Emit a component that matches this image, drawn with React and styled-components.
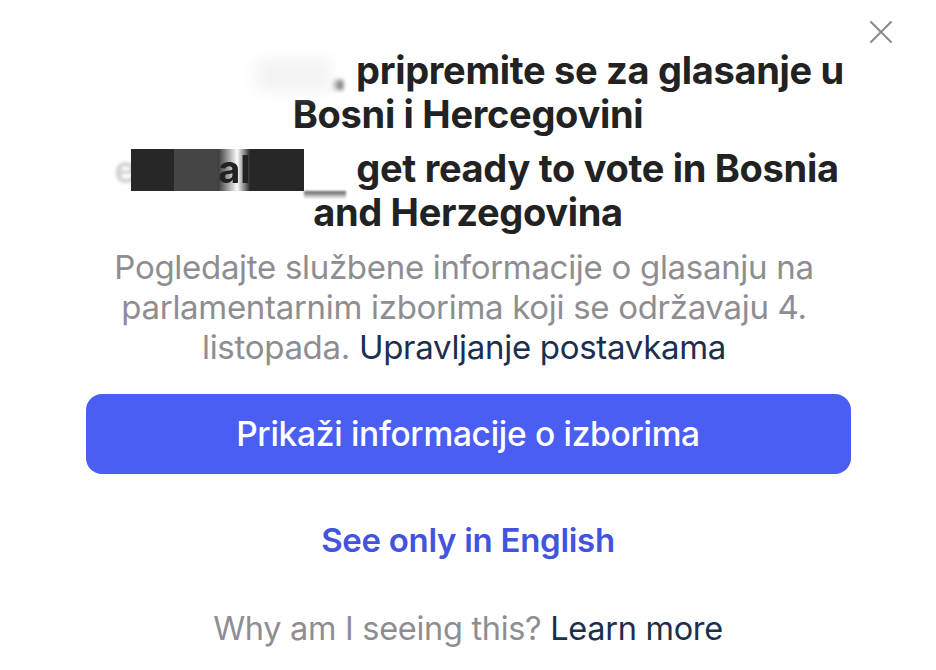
import styled, { createGlobalStyle } from "styled-components";

const GlobalStyle = createGlobalStyle`
  html, body {
    margin: 0;
    padding: 0;
    background: #ffffff;
  }
  body {
    font-family: Inter, "Noto Sans", "Liberation Sans", sans-serif;
    -webkit-font-smoothing: antialiased;
  }
`

const Sheet = styled.div`
  position: relative;
  width: 936px;
  height: 670px;
  overflow: hidden;
  background: #fff;
  display: flex;
  flex-direction: column;
  align-items: center;
  padding: 48px 86px 0 86px;
  box-sizing: border-box;
`

const CloseButton = styled.button`
  position: absolute;
  top: 18px;
  right: 41px;
  width: 28px;
  height: 28px;
  padding: 0;
  border: none;
  background: transparent;
  display: flex;
  align-items: center;
  justify-content: center;
  cursor: pointer;
`

const Title = styled.h2`
  margin: 0;
  width: 100%;
  text-align: center;
  font-size: 38px;
  line-height: 44px;
  font-weight: 700;
  color: #222222;
  letter-spacing: -0.3px;
  white-space: nowrap;
  & + & {
    margin-top: 10px;
  }
`

/* the blurred-out name at the start of each title */
const Redacted = styled.span`
  display: inline-flex;
  align-items: flex-start;
  vertical-align: top;
  width: ${props => props.$w}px;
  height: 44px;
  margin-right: 10px;
  letter-spacing: 0;
`

const Smudge = styled.span`
  position: relative;
  flex: none;
  width: ${props => props.$w}px;
  height: ${props => props.$h || 42}px;
  margin-top: ${props => props.$top || 0}px;
  background: ${props => props.$bg || "transparent"};
  filter: blur(${props => props.$blur || 0}px);
  color: ${props => props.$color || "transparent"};
  font-size: 38px;
  line-height: 40px;
`

const Description = styled.p`
  margin: 13px 0 0;
  width: 100%;
  padding-right: 8px;
  box-sizing: border-box;
  text-align: center;
  font-size: 33px;
  line-height: 40px;
  font-weight: 400;
  color: #8e8e92;
  letter-spacing: -0.3px;
  white-space: nowrap;
`

const InlineLink = styled.a`
  color: #1b2f4e;
  text-decoration: none;
`

const PrimaryButton = styled.button`
  margin-top: 27px;
  width: 765px;
  height: 80px;
  flex: none;
  border: none;
  border-radius: 16px;
  background: #4b5ef4;
  color: #ffffff;
  font-family: inherit;
  font-size: 33.5px;
  font-weight: 500;
  letter-spacing: -0.3px;
  cursor: pointer;
`

const TextButton = styled.button`
  margin-top: 46px;
  border: none;
  background: transparent;
  color: #4353dd;
  font-family: inherit;
  font-size: 33px;
  line-height: 40px;
  font-weight: 600;
  letter-spacing: -0.3px;
  padding: 0;
  cursor: pointer;
`

const Footer = styled.p`
  margin: 49px 0 0;
  text-align: center;
  font-size: 32.5px;
  line-height: 40px;
  color: #8e8e92;
  letter-spacing: -0.3px;
  white-space: nowrap;
`

const CloseIcon = () => (
  <svg width="24" height="24" viewBox="0 0 24 24" fill="none">
    <path d="M2 2L22 22M22 2L2 22" stroke="#8a8a8a" strokeWidth="2" strokeLinecap="round" />
  </svg>
)

const App = () => {
  return (
    <>
      <GlobalStyle />
      <Sheet>
        <CloseButton aria-label="Close">
          <CloseIcon />
        </CloseButton>

        <Title>
          <Redacted $w={254}>
            <Smudge $w={164} />
            <Smudge $w={75} $h={34} $top={10} $bg="#f4f4f4" $blur={7} />
            <Smudge $w={12} $h={10} $top={32} $bg="linear-gradient(90deg, #fff, #555)" $blur={2} />
          </Redacted>
          pripremite se za glasanje u<br />
          Bosni i Hercegovini
        </Title>

        <Title>
          <Redacted $w={249}>
            <Smudge $w={17} />
            <Smudge $w={13} $top={3} $color="#d4d4d4" $blur={1.5}>e</Smudge>
            <Smudge $w={4} />
            <Smudge $w={43} $top={3} $bg="#272727" />
            <Smudge $w={44} $top={3} $bg="#454545" />
            <Smudge $w={32} $top={3} $bg="linear-gradient(90deg, #3a3a3a, #fafafa 60%, #2a2a2a)" $color="#222">al</Smudge>
            <Smudge $w={54} $top={3} $bg="#272727" />
            <Smudge $w={42} $h={8} $top={45} $bg="linear-gradient(180deg, #555, #fff)" $blur={1} />
          </Redacted>
          get ready to vote in Bosnia<br />
          and Herzegovina
        </Title>

        <Description>
          Pogledajte službene informacije o glasanju na<br />
          parlamentarnim izborima koji se održavaju 4.<br />
          listopada. <InlineLink href="#">Upravljanje postavkama</InlineLink>
        </Description>

        <PrimaryButton>Prikaži informacije o izborima</PrimaryButton>

        <TextButton>See only in English</TextButton>

        <Footer>
          Why am I seeing this? <InlineLink href="#">Learn more</InlineLink>
        </Footer>
      </Sheet>
    </>
  );
};

export default App;
